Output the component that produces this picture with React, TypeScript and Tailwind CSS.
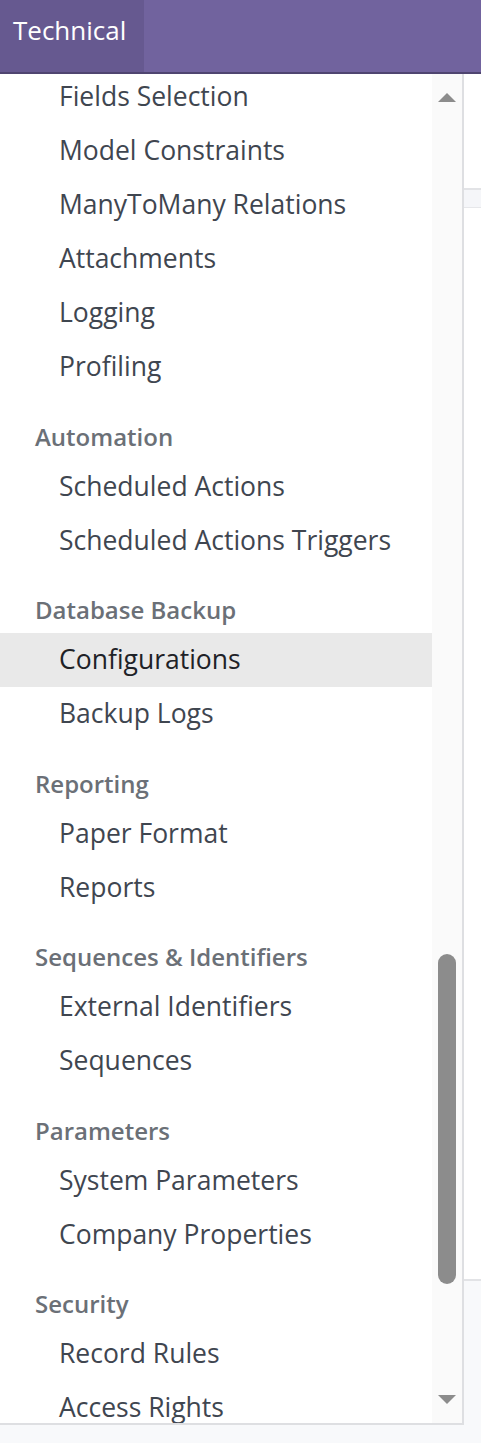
const sections: { title?: string; items: string[] }[] = [
  {
    items: [
      "Fields Selection",
      "Model Constraints",
      "ManyToMany Relations",
      "Attachments",
      "Logging",
      "Profiling",
    ],
  },
  { title: "Automation", items: ["Scheduled Actions", "Scheduled Actions Triggers"] },
  { title: "Database Backup", items: ["Configurations", "Backup Logs"] },
  { title: "Reporting", items: ["Paper Format", "Reports"] },
  { title: "Sequences & Identifiers", items: ["External Identifiers", "Sequences"] },
  { title: "Parameters", items: ["System Parameters", "Company Properties"] },
  { title: "Security", items: ["Record Rules", "Access Rights"] },
];

const ACTIVE = "Configurations";

function MenuItem({ label }: { label: string }) {
  const active = label === ACTIVE;
  return (
    <div
      className={`flex h-[54px] items-center whitespace-nowrap pl-[59px] text-[26.5px] ${
        active ? "bg-[#e9e9e9] text-[#1e2227]" : "text-[#3f4650]"
      }`}
    >
      {label}
    </div>
  );
}

function Scrollbar() {
  return (
    <div className="relative w-[30px] bg-[#fafafa]">
      <div className="absolute left-[6px] top-[19px] h-0 w-0 border-x-[9px] border-b-[9px] border-x-transparent border-b-[#8c8c8c]" />
      <div className="absolute left-[6px] top-[880px] h-[330px] w-[18px] rounded-full bg-[#8c8c8c]" />
      <div className="absolute bottom-[19px] left-[6px] h-0 w-0 border-x-[9px] border-t-[9px] border-x-transparent border-t-[#8c8c8c]" />
    </div>
  );
}

export default function App() {
  return (
    <div
      className="relative h-[1443px] w-[481px] overflow-hidden bg-[#f8f9fb]"
      style={{ fontFamily: '"Open Sans", "Noto Sans", sans-serif' }}
    >
      {/* navbar */}
      <div className="flex h-[74px] border-b-2 border-[#4f4570] bg-[#71639e]">
        <div className="flex w-[144px] items-center bg-[#665990] pl-[13px] pb-[12px] text-[26px] text-white">
          Technical
        </div>
      </div>

      {/* page content behind the menu */}
      <div className="flex flex-col">
        <div className="h-[116px] border-b-2 border-[#e2e3e6] bg-white" />
        <div className="h-[18px] border-b border-[#e6e7ea] bg-[#f5f6f9]" />
        <div className="h-[1073px] border-b-2 border-[#e2e3e6] bg-white" />
      </div>

      {/* dropdown */}
      <div className="absolute left-0 top-[74px] flex h-[1351px] w-[464px] border-b-2 border-r-2 border-[#dedfe2] bg-white">
        <div className="w-[432px] overflow-hidden">
          <div className="-mt-[4px]">
            {sections.map((s, i) => (
              <div key={i}>
                {s.title ? (
                  <div className="mt-[19.5px] flex h-[46px] items-center whitespace-nowrap pl-[35px] text-[24px] font-semibold text-[#6b7077]">
                    {s.title}
                  </div>
                ) : null}
                {s.items.map((it) => (
                  <MenuItem key={it} label={it} />
                ))}
              </div>
            ))}
          </div>
        </div>
        <Scrollbar />
      </div>
    </div>
  );
}
